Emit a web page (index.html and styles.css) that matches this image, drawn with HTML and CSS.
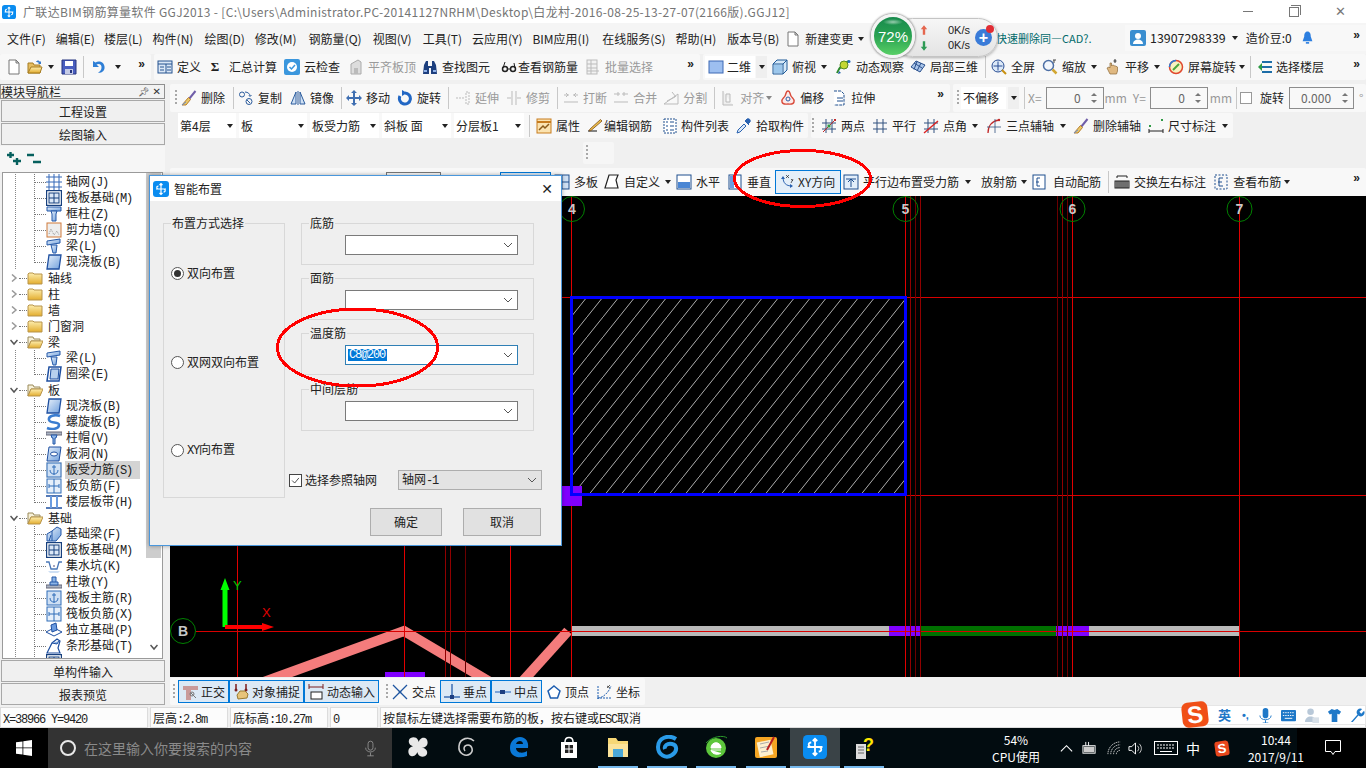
FILE: index.html
```html
<!DOCTYPE html>
<html lang="zh-CN">
<head>
<meta charset="utf-8">
<title>GGJ2013</title>
<link rel="stylesheet" href="styles.css">
</head>
<body>
<svg class="sprite" xmlns="http://www.w3.org/2000/svg">
<defs>
<linearGradient id="gb" x1="0" y1="0" x2="1" y2="1"><stop offset="0" stop-color="#e8f1fb"/><stop offset="1" stop-color="#6f9fdc"/></linearGradient>
<linearGradient id="gf" x1="0" y1="0" x2="0" y2="1"><stop offset="0" stop-color="#fdeeb0"/><stop offset="1" stop-color="#e3ad2e"/></linearGradient>
<symbol id="logo" viewBox="0 0 16 16"><rect width="16" height="16" rx="3" fill="#0a8cf0"/><path d="M8 2.500v11M3 8h10M5.500 8c-2 0-2.500-3 0-3M10.500 8c2 0 2.500 3 0 3M6.500 4l1.500-1.500L9.500 4M6.500 12l1.500 1.500L9.500 12" fill="none" stroke="#fff" stroke-width="1.200"/></symbol>
<symbol id="new" viewBox="0 0 16 16"><path d="M3 1h7l3 3v11H3z" fill="#fff" stroke="#777"/><path d="M10 1v3h3z" fill="#ddd" stroke="#777"/></symbol>
<symbol id="open" viewBox="0 0 16 16"><path d="M1 4h5l1 2h6v8H1z" fill="#e5bd60" stroke="#a67c22"/><path d="M1 14l3-6h11l-2 6z" fill="url(#gf)" stroke="#a67c22"/><path d="M9 3c1-2 3-2 4 0l1-1v3h-3l1-1c-1-1-2-1-3-1" fill="#3a7bc8"/></symbol>
<symbol id="save" viewBox="0 0 16 16"><path d="M1 1h14v14H1z" fill="#4a5fc0" stroke="#26357e"/><rect x="4" y="2" width="8" height="5" fill="#fff"/><rect x="4" y="10" width="8" height="5" fill="#c5cbe6"/><rect x="9" y="11" width="2" height="3" fill="#26357e"/></symbol>
<symbol id="undo" viewBox="0 0 16 16"><path d="M2 2v6h6L5.500 5.500C8 4 11 5.500 10.500 9 10.200 11 9 12.500 7 14c5 0 7-3 6.500-6.500C13 3 8 1 4.500 3.500z" fill="#2f7fd6"/></symbol>
<symbol id="def" viewBox="0 0 16 16"><rect x="1" y="2" width="14" height="12" fill="#dbe7f6" stroke="#25538f"/><path d="M1 5h14M3 8h4M3 11h4M9 5v9M10 8h4M10 11h4" stroke="#25538f" fill="none"/></symbol>
<symbol id="cloud" viewBox="0 0 16 16"><rect width="16" height="16" rx="2" fill="#3b97dd"/><circle cx="8" cy="8" r="5" fill="#fff"/><path d="M5.500 8l2 2 3.500-4" fill="none" stroke="#3b97dd" stroke-width="1.500"/></symbol>
<symbol id="flat" viewBox="0 0 16 16"><path d="M3 15V5l7-4 3 2v12z" fill="#ddd" stroke="#aaa"/><path d="M6 15V9h4v6" fill="#bbb"/></symbol>
<symbol id="find" viewBox="0 0 16 16"><path d="M1 15l1-9 2-4h2v5h4V2h2l2 4 1 9H9V9H7v6z" fill="#1d3f7e"/><rect x="2" y="11" width="3" height="2" fill="#8fb1e8"/><rect x="11" y="11" width="3" height="2" fill="#8fb1e8"/></symbol>
<symbol id="glass" viewBox="0 0 16 16"><circle cx="4" cy="10" r="2.500" fill="none" stroke="#222" stroke-width="1.500"/><circle cx="12" cy="10" r="2.500" fill="none" stroke="#222" stroke-width="1.500"/><path d="M6 10h4M2 9l2-6M14 9l-1-5" stroke="#222" fill="none"/></symbol>
<symbol id="batch" viewBox="0 0 16 16"><rect x="2" y="1" width="10" height="14" fill="#f2f2f2" stroke="#bbb"/><path d="M2 5h10M2 9h10M2 12h12M6 1v14" stroke="#bbb" fill="none"/></symbol>
<symbol id="d2" viewBox="0 0 16 16"><rect x="1" y="2" width="14" height="12" fill="#9dbff0" stroke="#3d69b4"/></symbol>
<symbol id="top" viewBox="0 0 16 16"><path d="M1 5l4-4h10v10l-4 4H1z" fill="#d5e8f8" stroke="#1f5a98"/><path d="M1 5h10v10M11 5l4-4" fill="none" stroke="#1f5a98"/><rect x="2" y="6" width="8" height="8" fill="#9cc7ec"/></symbol>
<symbol id="orbit" viewBox="0 0 16 16"><path d="M1 14C3 9 8 4 13 2" fill="none" stroke="#2c8a2c" stroke-width="2"/><circle cx="8" cy="6" r="4" fill="#c4d733" stroke="#5a8a20"/><path d="M2 15l3-1-2-2z" fill="#1c5fa8"/><circle cx="13" cy="2.500" r="1.500" fill="#2b6fc2"/></symbol>
<symbol id="local" viewBox="0 0 16 16"><path d="M1 8l5-6 9 4-5 7z" fill="#a9c5ea" stroke="#294f8c"/><path d="M4 4l8 5M7 2.500l-3 8M11 4l-4 8" stroke="#294f8c" fill="none"/></symbol>
<symbol id="full" viewBox="0 0 16 16"><circle cx="7" cy="7" r="6" fill="#dce9f8" stroke="#284d94"/><path d="M7 2.500v9M2.500 7h9" stroke="#284d94"/><path d="M11 11l4 4" stroke="#c89010" stroke-width="2"/></symbol>
<symbol id="zm" viewBox="0 0 16 16"><circle cx="6.500" cy="6.500" r="5" fill="#f2f6fc" stroke="#4d6fa5" stroke-width="1.500"/><path d="M10.500 10.500l4 4" stroke="#d2a732" stroke-width="2.500"/><path d="M12 1v3M14 1h-3" stroke="#444"/></symbol>
<symbol id="pan" viewBox="0 0 16 16"><path d="M5 15L2 9l2-1 1 1V4h1.500v3l1-1h1l1 1 1 0 2 1v4l-1 3z" fill="#e0b982" stroke="#8c6a3a" stroke-width=".7"/><path d="M10 0v4M8.500 2h3" stroke="#333"/></symbol>
<symbol id="rot" viewBox="0 0 16 16"><circle cx="8" cy="8" r="6.500" fill="#f8f2c0" stroke="#e0482e" stroke-width="1.500"/><path d="M1.500 8A6.500 6.500 0 0 1 8 1.500" fill="none" stroke="#2d7bd6" stroke-width="1.500"/><path d="M5 11l6-6" stroke="#4aa63a" stroke-width="2"/></symbol>
<symbol id="floor" viewBox="0 0 16 16"><path d="M5 3h10M5 8h10M5 13h10" stroke="#1d6ea8" stroke-width="2"/><path d="M1 8l4-4v8z" fill="#2e9a44"/></symbol>
<symbol id="brush" viewBox="0 0 16 16"><path d="M14.500 1L8 9" stroke="#6f5da8" stroke-width="2"/><path d="M7.500 7.500l2 2L5 15H1z" fill="#e9c96a" stroke="#b87d2a"/><path d="M1 15l4-3" stroke="#6a8fd0"/></symbol>
<symbol id="copy" viewBox="0 0 16 16"><circle cx="4" cy="4.500" r="2.500" fill="none" stroke="#2a5b9c"/><circle cx="11" cy="11.500" r="3" fill="none" stroke="#2a5b9c"/><path d="M7 2c3 0 5 2 5 4M11 5.500l1 1 1.500-1.500M9 10l3 3" stroke="#2a5b9c" fill="none"/></symbol>
<symbol id="mirror" viewBox="0 0 16 16"><path d="M6 2v12H1zM10 2v12h5z" fill="#cfe0f4" stroke="#2a5b9c"/><path d="M8 1v14" stroke="#2a5b9c"/></symbol>
<symbol id="move" viewBox="0 0 16 16"><path d="M8 0l3 3H9v4h4V5l3 3-3 3V9H9v4h2l-3 3-3-3h2V9H3v2L0 8l3-3v2h4V3H5z" fill="#3f6fb2"/></symbol>
<symbol id="rotate" viewBox="0 0 16 16"><path d="M8 3a5.500 5.500 0 1 1-5 3" fill="none" stroke="#2267c4" stroke-width="3"/><path d="M5 0l5 3-5 3z" fill="#2267c4"/></symbol>
<symbol id="ext" viewBox="0 0 16 16"><path d="M1 8h8M11 2h3v12h-3z" stroke="#bbb" fill="none" stroke-dasharray="2 1"/></symbol>
<symbol id="trim" viewBox="0 0 16 16"><path d="M6 1v14M10 1v14M1 8h4M11 8h4" stroke="#bbb" fill="none"/></symbol>
<symbol id="brk" viewBox="0 0 16 16"><path d="M1 5h5M10 5h5M1 12h14M3 3l2 2-2 2M13 3l-2 2 2 2" stroke="#bbb" fill="none"/></symbol>
<symbol id="mrg" viewBox="0 0 16 16"><path d="M1 4h6M9 4h6M1 12h14M5 2v4M11 2v4" stroke="#bbb" fill="none"/></symbol>
<symbol id="spl" viewBox="0 0 16 16"><path d="M1 14h14V4zM4 11l8-4M9 2l4 5" stroke="#bbb" fill="none"/></symbol>
<symbol id="aln" viewBox="0 0 16 16"><path d="M3 1v14h10M6 4h4v8H6z" stroke="#bbb" fill="#eee"/></symbol>
<symbol id="off" viewBox="0 0 16 16"><path d="M8 1c2 0 2 3 3 5s4 3 3 6-4 2-6 2-5 1-6-2 2-4 3-6 1-5 3-5z" fill="#fbeaea" stroke="#d84a3a" stroke-width="1.400"/><circle cx="8" cy="9" r="2" fill="none" stroke="#2b5fa8"/></symbol>
<symbol id="str" viewBox="0 0 16 16"><path d="M3 1h7l3 3v11H3" fill="#fff" stroke="#1e4f8e" stroke-dasharray="3 1"/><path d="M6 8h6M6 11h6" stroke="#1e4f8e"/></symbol>
<symbol id="attr" viewBox="0 0 16 16"><rect x="1" y="1" width="14" height="14" fill="#fbe3b0" stroke="#c77c1e"/><path d="M1 4h14" stroke="#c77c1e" stroke-width="2"/><path d="M3 12l4-4 2 2 4-4" stroke="#8a5a18" fill="none" stroke-width="1.500"/></symbol>
<symbol id="edit" viewBox="0 0 16 16"><path d="M1 13h9" stroke="#111"/><path d="M3 11l-1 2 2-.5L15 3l-1.500-1.500z" fill="#f0c24a" stroke="#7a4b1a" stroke-width=".8"/></symbol>
<symbol id="list" viewBox="0 0 16 16"><rect x="2" y="1" width="12" height="14" fill="#fff" stroke="#1e4f8e" stroke-dasharray="2 1"/><path d="M4 4h2M8 4h4M4 8h2M8 8h4M4 12h2M8 12h4" stroke="#1e4f8e"/></symbol>
<symbol id="pick" viewBox="0 0 16 16"><path d="M1 15l1-3 6-6 2 2-6 6z" fill="#dce9f8" stroke="#2a62b0"/><path d="M9 3l4 4M11 1c2-1 4 1 3 3l-2 2-3-3z" fill="#2a62b0" stroke="#2a62b0"/></symbol>
<symbol id="two" viewBox="0 0 16 16"><path d="M5 1v14M11 1v14M1 5h14M1 11h14" stroke="#30507e"/><path d="M2 14L14 2" stroke="#c22a2a"/><rect x="6.500" y="6.500" width="3" height="3" fill="#2e9a44"/><rect x="13" y="1" width="2" height="2" fill="#c22a2a"/></symbol>
<symbol id="par" viewBox="0 0 16 16"><path d="M5 1v14M11 1v14M1 5h14M1 11h14" stroke="#30507e"/></symbol>
<symbol id="ang" viewBox="0 0 16 16"><path d="M5 1v14M11 1v14M1 5h14M1 11h14" stroke="#30507e"/><path d="M1 15L15 3" stroke="#d22" stroke-width="1.400"/></symbol>
<symbol id="arc" viewBox="0 0 16 16"><path d="M2 15C2 8 6 3 13 2" fill="none" stroke="#c22a2a" stroke-width="1.300"/><path d="M1 9h14M9 1v14" stroke="#30507e" stroke-width=".8"/><circle cx="13" cy="2" r="1.200" fill="#c22a2a"/></symbol>
<symbol id="size" viewBox="0 0 16 16"><path d="M1 11v4M15 11v4M1 13h14" stroke="#222"/><rect x="1" y="7" width="2" height="2" fill="#2e9a44"/><rect x="13" y="1" width="2" height="2" fill="#2e9a44"/></symbol>
<symbol id="multi" viewBox="0 0 16 16"><rect x="1" y="1" width="14" height="14" fill="#cfe0f4" stroke="#1e4f8e"/><path d="M8 1v14M1 8h14" stroke="#1e4f8e"/></symbol>
<symbol id="cust" viewBox="0 0 16 16"><path d="M5 1h9l-2 5 2 8H1z" fill="#fff" stroke="#222" stroke-width="1.200"/></symbol>
<symbol id="hor" viewBox="0 0 16 16"><rect x="1" y="1" width="14" height="14" fill="#fff" stroke="#1e4f8e"/><rect x="2" y="8" width="12" height="6" fill="#4a86d4"/></symbol>
<symbol id="ver" viewBox="0 0 16 16"><rect x="2" y="1" width="12" height="14" fill="#fff" stroke="#1e4f8e"/><rect x="3" y="2" width="4" height="12" fill="#6a9be0"/></symbol>
<symbol id="xyd" viewBox="0 0 16 16"><path d="M4 3c0 6 3 9 9 9" fill="none" stroke="#2a62b0"/><path d="M2 5l2-3 2 3M11 10l3 2-3 2" fill="#2a62b0"/><path d="M7 1l3 3M10 1L7 4M12 5l2 2M14 5l-2 4" stroke="#222" stroke-width=".7"/></symbol>
<symbol id="prl" viewBox="0 0 16 16"><rect x="1" y="1" width="14" height="14" fill="#e3eefa" stroke="#1e4f8e"/><path d="M3 5h10M8 5v8M5 8l3-3 3 3" stroke="#1e4f8e" fill="none"/></symbol>
<symbol id="auto" viewBox="0 0 16 16"><rect x="2" y="1" width="12" height="14" fill="#fff" stroke="#1e4f8e"/><path d="M9 4H6v8h3M5 8h3" stroke="#1e4f8e" fill="none"/></symbol>
<symbol id="swap" viewBox="0 0 16 16"><path d="M3 2h10M3 2v2M13 2v2" stroke="#222"/><rect x="1" y="7" width="14" height="7" fill="#bbb" stroke="#222"/><path d="M3 7v7M5 7v7M7 7v7M9 7v7M11 7v7M13 7v7" stroke="#222"/></symbol>
<symbol id="vr" viewBox="0 0 16 16"><rect x="2" y="1" width="12" height="14" fill="none" stroke="#1e4f8e" stroke-dasharray="2 1.500"/><path d="M10 4H6v8h4M5 8h4" stroke="#1e4f8e" fill="none"/></symbol>
<symbol id="ort" viewBox="0 0 16 16"><path d="M1 2h15v4H9v10H4V6H1z" fill="#c99a9a"/><path d="M9 9l5 5" stroke="#777"/><circle cx="10" cy="10" r="2" fill="none" stroke="#777"/></symbol>
<symbol id="snp" viewBox="0 0 16 16"><path d="M3 0v6M13 0v6" stroke="#7b1e1e" stroke-width="1.500"/><circle cx="3" cy="6" r="1.500" fill="#7b1e1e"/><circle cx="13" cy="6" r="1.500" fill="#7b1e1e"/><path d="M5 15l-1-4 3-4 5 0 3 3-1 4z" fill="#e7c47a" stroke="#9a7a30"/></symbol>
<symbol id="dyn" viewBox="0 0 16 16"><path d="M1 0v5M15 0v5M1 3h14" stroke="#7b1e1e"/><rect x="3" y="8" width="11" height="7" fill="#fff" stroke="#222"/></symbol>
<symbol id="crs" viewBox="0 0 16 16"><path d="M1 1l14 14M15 1L1 15" stroke="#1e55a0" stroke-width="1.300"/><circle cx="8" cy="8" r="1.300" fill="#1e55a0"/></symbol>
<symbol id="prp" viewBox="0 0 16 16"><path d="M8 0v13M0 13h16" stroke="#3c6fb4" stroke-width="1.500"/><rect x="6" y="11" width="4" height="4" fill="#1e3f80"/></symbol>
<symbol id="mdp" viewBox="0 0 16 16"><path d="M0 8h16" stroke="#7aa3d8" stroke-width="2"/><rect x="5" y="6" width="5" height="4" fill="#1e3f80"/></symbol>
<symbol id="vtx" viewBox="0 0 16 16"><path d="M8 2l6 5-2.500 7h-7L2 7z" fill="#fff" stroke="#1e5eb0" stroke-width="1.500"/></symbol>
<symbol id="crd" viewBox="0 0 16 16"><path d="M2 14C7 14 13 8 15 2M2 2v13M1 14h15" stroke="#1e5eb0" fill="none" stroke-dasharray="2 1"/><path d="M11 2l3 2M14 1l-3 3" stroke="#222" stroke-width=".7"/></symbol>
<symbol id="grid" viewBox="0 0 16 16"><path d="M3 0v16M8 0v16M13 0v16M0 3h16M0 8h16M0 13h16" stroke="#3568b8"/></symbol>
<symbol id="raft" viewBox="0 0 16 16"><rect x=".5" y=".5" width="15" height="15" fill="#fff" stroke="#17407e" stroke-width="1.400"/><rect x="3" y="3" width="10" height="10" fill="#dbe7f6" stroke="#17407e"/><path d="M8 3v10M3 8h10" stroke="#17407e"/></symbol>
<symbol id="col" viewBox="0 0 16 16"><path d="M1 1h14v4H1z" fill="url(#gb)" stroke="#2458a8"/><path d="M5 5h6l-1 3v7H6V8z" fill="url(#gb)" stroke="#2458a8"/></symbol>
<symbol id="wall" viewBox="0 0 16 16"><rect x="1" y="1" width="14" height="14" fill="#eee" stroke="#d07a3a"/><path d="M3 12l2-5 3 6 3-4 2 4" stroke="#999" fill="none" stroke-dasharray="1 1"/></symbol>
<symbol id="beam" viewBox="0 0 16 16"><path d="M1 3l13-2v4L1 7z" fill="url(#gb)" stroke="#2458a8"/><path d="M5 7h6l-1 8H7z" fill="url(#gb)" stroke="#2458a8"/></symbol>
<symbol id="slab" viewBox="0 0 16 16"><path d="M3 1h12l-2 14H1z" fill="url(#gb)" stroke="#1e4fa0" stroke-width="1.300"/></symbol>
<symbol id="ring" viewBox="0 0 16 16"><path d="M3 1h12l-2 14H1z" fill="#fff" stroke="#1e4fa0" stroke-width="1.500"/><path d="M5 3h8l-1 10H4z" fill="#b8d0ee" stroke="#1e4fa0"/></symbol>
<symbol id="spiral" viewBox="0 0 16 16"><path d="M14 2C9 0 2 2 3 6s10 1 10 5-7 5-12 3" fill="none" stroke="#3b7dd0" stroke-width="2.500"/></symbol>
<symbol id="cap" viewBox="0 0 16 16"><rect x="0" y="2" width="16" height="3" fill="#aab4c4" stroke="#667"/><path d="M5 5h6l-1 3H9v6H7V8H6z" fill="#8cb4e6" stroke="#2458a8"/></symbol>
<symbol id="hole" viewBox="0 0 16 16"><path d="M3 1h12l-2 14H1z" fill="url(#gb)" stroke="#1e4fa0"/><ellipse cx="8" cy="8" rx="3.500" ry="2" fill="#fff" stroke="#1e4fa0"/></symbol>
<symbol id="rein" viewBox="0 0 16 16"><rect x="1" y="1" width="14" height="14" fill="#cfe0f4" stroke="#2f6cb8"/><path d="M8 3v10M4 8c0 3 2 4 4 4s4-1 4-4" fill="none" stroke="#2f6cb8"/><path d="M6 5h4" stroke="#2f6cb8"/></symbol>
<symbol id="negr" viewBox="0 0 16 16"><rect x="1" y="1" width="14" height="14" fill="#e6effa" stroke="#2f6cb8"/><path d="M8 1v14M3 8h10M3 6v4M13 6v4" stroke="#2f6cb8"/></symbol>
<symbol id="band" viewBox="0 0 16 16"><path d="M0 2h16M0 14h16" stroke="#1e4fa0" stroke-width="1.400"/><path d="M5 2v12M11 2v12" stroke="#6a9be0" stroke-width="2"/></symbol>
<symbol id="fbeam" viewBox="0 0 16 16"><path d="M1 15V8l5-3 5-4 4 2v6l-5 6z" fill="url(#gb)" stroke="#2458a8"/><path d="M6 5v10M3 15l2-6" stroke="#2458a8"/></symbol>
<symbol id="pit" viewBox="0 0 16 16"><path d="M0 4h3l2 7h6l2-7h3" fill="none" stroke="#4a78b8" stroke-width="1.300"/><path d="M2 13h12l-2 2H4z" fill="#cfe0f4"/><circle cx="8" cy="8" r="1" fill="#88a"/></symbol>
<symbol id="pier" viewBox="0 0 16 16"><rect y="11" width="16" height="3" fill="#aab4c4" stroke="#667"/><path d="M4 11V8h8v3zM6 8V3h4v5" fill="#8cb4e6" stroke="#2458a8"/></symbol>
<symbol id="ind" viewBox="0 0 16 16"><path d="M0 10l8-4 8 4-8 4z" fill="#fff" stroke="#1e4fa0"/><path d="M5 3l5-2 1 7-5 2z" fill="#6a9be0" stroke="#1e4fa0"/></symbol>
<symbol id="strip" viewBox="0 0 16 16"><path d="M1 15l2-4 3-6 5-4 3 2-2 7 2 5z" fill="#fff" stroke="#1e4fa0" stroke-width="1.200"/><path d="M6 5l5 1 2-3" fill="#8cb4e6" stroke="#1e4fa0"/></symbol>
<symbol id="fc" viewBox="0 0 16 16"><path d="M1 4l1-1h4l1 1h8v10H1z" fill="url(#gf)" stroke="#b8944a"/></symbol>
<symbol id="fo" viewBox="0 0 16 16"><path d="M1 3h5l1 2h6v2H4l-3 7z" fill="#f6f0d8" stroke="#9a8a5a"/><path d="M1 14l3-7h12l-3 7z" fill="url(#gf)" stroke="#b8944a"/></symbol>
<symbol id="chr" viewBox="0 0 8 8"><path d="M2 .5L6 4 2 7.500" fill="none" stroke="#999" stroke-width="1.500"/></symbol>
<symbol id="chd" viewBox="0 0 8 8"><path d="M.5 2L4 6l3.500-4" fill="none" stroke="#555" stroke-width="1.500"/></symbol>
<symbol id="cbv" viewBox="0 0 10 6"><path d="M1 1l4 4 4-4" fill="none" stroke="#555"/></symbol>
</defs>
</svg>

<div class="app">
  <header class="titlebar">
    <svg class="i t-logo"><use href="#logo"/></svg>
    <span class="t-text">广联达BIM钢筋算量软件 GGJ2013 - [C:\Users\Administrator.PC-20141127NRHM\Desktop\白龙村-2016-08-25-13-27-07(2166版).GGJ12]</span>
    <div class="wctl">
      <span class="wmin"></span>
      <span class="wres"></span>
      <span class="wcls">✕</span>
    </div>
  </header>

  <nav class="menurow">
    <div class="menu">
      <span class="mi m7">文件(F)</span><span class="mi">编辑(E)</span><span class="mi m9">楼层(L)</span><span class="mi">构件(N)</span><span class="mi m11">绘图(D)</span><span class="mi">修改(M)</span><span class="mi m12">钢筋量(Q)</span><span class="mi m11">视图(V)</span><span class="mi m11">工具(T)</span><span class="mi">云应用(Y)</span><span class="mi">BIM应用(I)</span><span class="mi m13">在线服务(S)</span><span class="mi">帮助(H)</span><span class="mi m11">版本号(B)</span>
      <span class="it m6"><svg class="i"><use href="#new"/></svg>新建变更</span><span class="caret m5"></span>
    </div>
    <span class="news">快速删除同—CAD?.</span>
    <div class="userbar">
      <svg class="i ua" viewBox="0 0 16 16"><rect width="16" height="16" rx="2" fill="#3a8ed0"/><circle cx="8" cy="6" r="3" fill="#fff"/><path d="M3 14c0-6 10-6 10 0z" fill="#fff"/></svg>
      <span class="un">13907298339</span><span class="caret m6"></span>
      <span class="m8 bean">造价豆:0</span>
      <svg class="i bell" viewBox="0 0 16 16"><path d="M8 0c3 0 4 3 4 6l2 6H2l2-6c0-3 1-6 4-6z" fill="#2d7fe0"/><rect x="6" y="13" width="4" height="2" fill="#2d7fe0"/></svg>
      <span class="more">»</span>
    </div>
  </nav>

  <div class="tbrow r1">
    <div class="bar b1a">
      <svg class="i m6"><use href="#new"/></svg>
      <svg class="i m5"><use href="#open"/></svg><span class="caret m5"></span>
      <svg class="i m7"><use href="#save"/></svg>
      <span class="sep m6"></span>
      <svg class="i m7"><use href="#undo"/></svg><span class="caret m8"></span>
      <span class="more">»</span>
    </div>
    <div class="bar b1b">
      <span class="it m3"><svg class="i"><use href="#def"/></svg>定义</span>
      <span class="it m9"><span class="sigma">Σ</span>汇总计算</span>
      <span class="it"><svg class="i"><use href="#cloud"/></svg>云检查</span>
      <span class="it m8 dis"><svg class="i"><use href="#flat"/></svg>平齐板顶</span>
      <span class="it m6"><svg class="i"><use href="#find"/></svg>查找图元</span>
      <span class="it m11 tight"><svg class="i"><use href="#glass"/></svg>查看钢筋量</span>
      <span class="it dis"><svg class="i"><use href="#batch"/></svg>批量选择</span>
      <span class="more">»</span>
    </div>
    <div class="bar b1c">
      <span class="combo m2 c2d"><svg class="i"><use href="#d2"/></svg>二维</span>
      <span class="cbtn m1"><span class="caret"></span></span>
      <span class="it m5"><svg class="i"><use href="#top"/></svg>俯视</span><span class="caret m5"></span>
      <span class="it m9"><svg class="i"><use href="#orbit"/></svg>动态观察</span>
      <span class="it m6"><svg class="i"><use href="#local"/></svg>局部三维</span>
      <span class="sep"></span>
      <span class="it m5"><svg class="i"><use href="#full"/></svg>全屏</span>
      <span class="it m7"><svg class="i"><use href="#zm"/></svg>缩放</span><span class="caret m5"></span>
      <span class="it m8"><svg class="i"><use href="#pan"/></svg>平移</span><span class="caret m5"></span>
      <span class="it m8"><svg class="i"><use href="#rot"/></svg>屏幕旋转</span><span class="caret m3"></span>
      <span class="sep m5"></span>
      <span class="it m6 tight2"><svg class="i"><use href="#floor"/></svg>选择楼层</span>
      <span class="more">»</span>
    </div>
  </div>

  <div class="main">
    <aside class="nav">
      <div class="navtitle"><span>模块导航栏</span><span class="navpin">📌︎</span><span class="navx">✕</span></div>
      <div class="navbtn">工程设置</div>
      <div class="navbtn">绘图输入</div>
      <div class="treehead">
        <svg class="i" viewBox="0 0 16 16"><path d="M1 4h7M4.500 1v6M7 10h8M11 7v7" stroke="#06605e" stroke-width="2.400"/></svg>
        <svg class="i m4" viewBox="0 0 16 16"><path d="M1 4h7M7 11h8" stroke="#06605e" stroke-width="2.400"/></svg>
      </div>
      <div class="tree">
        <div class="list">
          <div class="row c"><i class="g"></i><svg class="i"><use href="#grid"/></svg><span>轴网<b class="la">(J)</b></span></div>
          <div class="row c"><i class="g"></i><svg class="i"><use href="#raft"/></svg><span>筏板基础<b class="la">(M)</b></span></div>
          <div class="row c"><i class="g"></i><svg class="i"><use href="#col"/></svg><span>框柱<b class="la">(Z)</b></span></div>
          <div class="row c"><i class="g"></i><svg class="i"><use href="#wall"/></svg><span>剪力墙<b class="la">(Q)</b></span></div>
          <div class="row c"><i class="g"></i><svg class="i"><use href="#beam"/></svg><span>梁<b class="la">(L)</b></span></div>
          <div class="row c last"><i class="g"></i><svg class="i"><use href="#slab"/></svg><span>现浇板<b class="la">(B)</b></span></div>
          <div class="row p"><svg class="chv"><use href="#chr"/></svg><i class="d"></i><svg class="i"><use href="#fc"/></svg><span>轴线</span></div>
          <div class="row p"><svg class="chv"><use href="#chr"/></svg><i class="d"></i><svg class="i"><use href="#fc"/></svg><span>柱</span></div>
          <div class="row p"><svg class="chv"><use href="#chr"/></svg><i class="d"></i><svg class="i"><use href="#fc"/></svg><span>墙</span></div>
          <div class="row p"><svg class="chv"><use href="#chr"/></svg><i class="d"></i><svg class="i"><use href="#fc"/></svg><span>门窗洞</span></div>
          <div class="row p"><svg class="chv"><use href="#chd"/></svg><i class="d"></i><svg class="i"><use href="#fo"/></svg><span>梁</span></div>
          <div class="row c"><i class="g"></i><svg class="i"><use href="#beam"/></svg><span>梁<b class="la">(L)</b></span></div>
          <div class="row c last"><i class="g"></i><svg class="i"><use href="#ring"/></svg><span>圈梁<b class="la">(E)</b></span></div>
          <div class="row p"><svg class="chv"><use href="#chd"/></svg><i class="d"></i><svg class="i"><use href="#fo"/></svg><span>板</span></div>
          <div class="row c"><i class="g"></i><svg class="i"><use href="#slab"/></svg><span>现浇板<b class="la">(B)</b></span></div>
          <div class="row c"><i class="g"></i><svg class="i"><use href="#spiral"/></svg><span>螺旋板<b class="la">(B)</b></span></div>
          <div class="row c"><i class="g"></i><svg class="i"><use href="#cap"/></svg><span>柱帽<b class="la">(V)</b></span></div>
          <div class="row c"><i class="g"></i><svg class="i"><use href="#hole"/></svg><span>板洞<b class="la">(N)</b></span></div>
          <div class="row c sel"><i class="g"></i><svg class="i"><use href="#rein"/></svg><span>板受力筋<b class="la">(S)</b></span></div>
          <div class="row c"><i class="g"></i><svg class="i"><use href="#negr"/></svg><span>板负筋<b class="la">(F)</b></span></div>
          <div class="row c last"><i class="g"></i><svg class="i"><use href="#band"/></svg><span>楼层板带<b class="la">(H)</b></span></div>
          <div class="row p"><svg class="chv"><use href="#chd"/></svg><i class="d"></i><svg class="i"><use href="#fo"/></svg><span>基础</span></div>
          <div class="row c"><i class="g"></i><svg class="i"><use href="#fbeam"/></svg><span>基础梁<b class="la">(F)</b></span></div>
          <div class="row c"><i class="g"></i><svg class="i"><use href="#raft"/></svg><span>筏板基础<b class="la">(M)</b></span></div>
          <div class="row c"><i class="g"></i><svg class="i"><use href="#pit"/></svg><span>集水坑<b class="la">(K)</b></span></div>
          <div class="row c"><i class="g"></i><svg class="i"><use href="#pier"/></svg><span>柱墩<b class="la">(Y)</b></span></div>
          <div class="row c"><i class="g"></i><svg class="i"><use href="#rein"/></svg><span>筏板主筋<b class="la">(R)</b></span></div>
          <div class="row c"><i class="g"></i><svg class="i"><use href="#negr"/></svg><span>筏板负筋<b class="la">(X)</b></span></div>
          <div class="row c"><i class="g"></i><svg class="i"><use href="#ind"/></svg><span>独立基础<b class="la">(P)</b></span></div>
          <div class="row c"><i class="g"></i><svg class="i"><use href="#strip"/></svg><span>条形基础<b class="la">(T)</b></span></div>
          <div class="row c"><i class="g"></i><svg class="i"><use href="#raft"/></svg></div>
        </div>
        <div class="scroll"><div class="thumb"></div><svg class="sdown"><use href="#chd"/></svg></div>
      </div>
      <div class="navbtn">单构件输入</div>
      <div class="navbtn">报表预览</div>
    </aside>

    <section class="work">
      <div class="tbrow r2">
        <div class="bar b2a">
          <span class="grip m5"></span>
          <span class="it m4"><svg class="i"><use href="#brush"/></svg>删除</span>
          <span class="sep m8"></span>
          <span class="it m4"><svg class="i"><use href="#copy"/></svg>复制</span>
          <span class="it m8"><svg class="i"><use href="#mirror"/></svg>镜像</span>
          <span class="sep"></span>
          <span class="it m4"><svg class="i"><use href="#move"/></svg>移动</span>
          <span class="it m7"><svg class="i"><use href="#rotate"/></svg>旋转</span>
          <span class="sep"></span>
          <span class="it m6 dis"><svg class="i"><use href="#ext"/></svg>延伸</span>
          <span class="it m7 dis"><svg class="i"><use href="#trim"/></svg>修剪</span>
          <span class="sep"></span>
          <span class="it m5 dis"><svg class="i"><use href="#brk"/></svg>打断</span>
          <span class="it m6 dis"><svg class="i"><use href="#mrg"/></svg>合并</span>
          <span class="it m6 dis"><svg class="i"><use href="#spl"/></svg>分割</span>
          <span class="sep"></span>
          <span class="it m5 dis"><svg class="i"><use href="#aln"/></svg>对齐</span><span class="caret m2 dcaret"></span>
          <span class="it m8"><svg class="i"><use href="#off"/></svg>偏移</span>
          <span class="it m7"><svg class="i"><use href="#str"/></svg>拉伸</span>
          <span class="more">»</span>
        </div>
        <div class="bar b2b">
          <span class="grip m4"></span>
          <span class="combo m2 cno">不偏移</span>
          <span class="cbtn m2"><span class="caret"></span></span>
          <span class="sep m5"></span>
          <span class="lbl m3">X=</span>
          <span class="spin m4 s58">0<span class="spn"><i class="up"></i><i class="dn"></i></span></span>
          <span class="lbl m1">mm</span>
          <span class="lbl m6">Y=</span>
          <span class="spin m4 s58">0<span class="spn"><i class="up"></i><i class="dn"></i></span></span>
          <span class="lbl m2">mm</span>
          <span class="sep m4"></span>
          <span class="ck m3"></span>
          <span class="m8 rl">旋转</span>
          <span class="spin m5 s65">0.000<span class="spn"><i class="up"></i><i class="dn"></i></span></span>
          <span class="lbl m5">°</span>
        </div>
      </div>

      <div class="tbrow r3">
        <div class="bar b3a">
          <span class="cell w58">第4层<span class="caret"></span></span>
          <span class="cell w68">板<span class="caret"></span></span>
          <span class="cell w69">板受力筋<span class="caret"></span></span>
          <span class="cell w69">斜板 面<span class="caret"></span></span>
          <span class="cell w70">分层板1<span class="caret"></span></span>
          <span class="sep m2"></span>
          <span class="it m6"><svg class="i"><use href="#attr"/></svg>属性</span>
          <span class="it m7 tight"><svg class="i"><use href="#edit"/></svg>编辑钢筋</span>
          <span class="it m10 tight2"><svg class="i"><use href="#list"/></svg>构件列表</span>
          <span class="it m7"><svg class="i"><use href="#pick"/></svg>拾取构件</span>
        </div>
        <div class="bar b3b">
          <span class="grip m1"></span>
          <span class="it m7"><svg class="i"><use href="#two"/></svg>两点</span>
          <span class="it m7"><svg class="i"><use href="#par"/></svg>平行</span>
          <span class="it m7"><svg class="i"><use href="#ang"/></svg>点角</span><span class="caret m5"></span>
          <span class="it m8"><svg class="i"><use href="#arc"/></svg>三点辅轴</span><span class="caret m6"></span>
          <span class="it m7"><svg class="i"><use href="#brush"/></svg>删除辅轴</span>
          <span class="it m7"><svg class="i"><use href="#size"/></svg>尺寸标注</span><span class="caret m6"></span>
        </div>
      </div>

      <div class="tbrow r4"><div class="bar b4"><span class="grip m3"></span></div></div>

      <div class="tbrow r5">
        <div class="bar b5">
          <span class="hidbtn h1"></span>
          <span class="hidbtn h2"></span>
          <span class="it m3"><svg class="i"><use href="#multi"/></svg>多板</span>
          <span class="it m6"><svg class="i"><use href="#cust"/></svg>自定义</span><span class="caret m5"></span>
          <span class="it m5"><svg class="i"><use href="#hor"/></svg>水平</span>
          <span class="it m7 vr"><svg class="i"><use href="#ver"/></svg>垂直</span>
          <span class="it act xy"><svg class="i"><use href="#xyd"/></svg>XY方向</span>
          <span class="it m2"><svg class="i"><use href="#prl"/></svg>平行边布置受力筋</span><span class="caret m6"></span>
          <span class="m10">放射筋</span><span class="caret m4"></span>
          <span class="it m4 au"><svg class="i"><use href="#auto"/></svg>自动配筋</span>
          <span class="sep m7"></span>
          <span class="it m5"><svg class="i"><use href="#swap"/></svg>交换左右标注</span>
          <span class="it m7"><svg class="i"><use href="#vr"/></svg>查看布筋</span><span class="caret m3"></span>
          <span class="more">»</span>
        </div>
      </div>

      <div class="canvas">
        <svg class="cad" viewBox="170 196 1196 481" xmlns="http://www.w3.org/2000/svg">
          <defs>
            <pattern id="hatch" width="16" height="20" patternUnits="userSpaceOnUse" x="571" y="297"><path d="M0 20L16 0" stroke="#c0c0c0" stroke-width=".9"/></pattern>
          </defs>
          <rect x="170" y="196" width="1196" height="481" fill="#000"/>
          <rect x="571.500" y="297.500" width="334" height="197" fill="url(#hatch)"/>
          <g stroke="#f47c7c" stroke-width="10" fill="none">
            <path d="M250 687L404 631L490 682"/>
            <path d="M522 682L568 631"/>
          </g>
          <rect x="572" y="626" width="667" height="10" fill="#b9b9b9"/>
          <rect x="889" y="626" width="32" height="10" fill="#8000ff"/>
          <rect x="921" y="626" width="135" height="10" fill="#007000"/>
          <rect x="1056" y="626" width="33" height="10" fill="#8000ff"/>
          <g shape-rendering="crispEdges">
            <rect x="385" y="672" width="40" height="5" fill="#8000ff"/>
            <path d="M170 297.500H1366M170 495.500H1366M196 631.500H1366" stroke="#d80000"/>
            <path d="M237.500 196V677M404.500 196V677M510.500 196V677M571.500 196V677M905.500 196V677M1072.500 196V677M1239.500 196V677" stroke="#e00000"/>
            <path d="M445.500 196V677M450.500 196V677M910.500 196V677M920.500 196V677M1062.500 196V677" stroke="#900000"/>
            <path d="M465.500 196V677M915.500 196V677M1057.500 196V677M1067.500 196V677" stroke="#6a0000"/>
            <rect x="561" y="486" width="21" height="20" fill="#8000ff"/>
          </g>
          <rect x="571.500" y="297.500" width="334" height="197" fill="none" stroke="#0000ff" stroke-width="3"/>
          <g fill="none" stroke="#008000">
            <circle cx="572" cy="209" r="12.500"/><circle cx="905.500" cy="209" r="12.500"/><circle cx="1072.500" cy="209" r="12.500"/><circle cx="1239.500" cy="209" r="12.500"/><circle cx="183" cy="631" r="12.500"/>
          </g>
          <g class="bub">
            <text x="572" y="214">4</text><text x="905.500" y="214">5</text><text x="1072.500" y="214">6</text><text x="1239.500" y="214">7</text><text x="183" y="636">B</text>
          </g>
          <path d="M222.500 627V590H220.500L225 578L229.500 590H227.500V627z" fill="#00ff00"/>
          <path d="M225 625H262V623L274 627L262 631V629H225z" fill="#ff0000"/>
          <text class="axy" x="233" y="590">Y</text>
          <text class="axx" x="262" y="617">X</text>
        </svg>
      </div>

      <div class="tbrow r6">
        <div class="bar b6">
          <span class="grip m3"></span>
          <span class="it tog"><svg class="i"><use href="#ort"/></svg>正交</span>
          <span class="it tog"><svg class="i"><use href="#snp"/></svg>对象捕捉</span>
          <span class="it tog"><svg class="i"><use href="#dyn"/></svg>动态输入</span>
          <span class="grip m7"></span>
          <span class="it m1"><svg class="i"><use href="#crs"/></svg>交点</span>
          <span class="it tog tg1"><svg class="i"><use href="#prp"/></svg>垂点</span>
          <span class="it tog"><svg class="i"><use href="#mdp"/></svg>中点</span>
          <span class="it m4 s3"><svg class="i"><use href="#vtx"/></svg>顶点</span>
          <span class="it m7"><svg class="i"><use href="#crd"/></svg>坐标</span>
        </div>
      </div>
    </section>
  </div>

  <footer class="status">
    <span class="st w148"><b class="la">X=38966 Y=9420</b></span>
    <span class="st w78">层高<b class="la">:2.8m</b></span>
    <span class="st w98">底标高<b class="la">:10.27m</b></span>
    <span class="st w48"><b class="la">0</b></span>
    <span class="st grow">按鼠标左键选择需要布筋的板，按右键或<b class="la">ESC</b>取消</span>
  </footer>

  <div class="taskbar">
    <div class="start"><svg class="win" viewBox="0 0 16 16"><path d="M0 2.300L6.500 1.400V7.500H0zM7.300 1.300L16 0V7.500H7.300zM0 8.300H6.500V14.500L0 13.700zM7.300 8.300H16V16L7.300 14.700z" fill="#fff"/></svg></div>
    <div class="search">
      <span class="cort"></span>
      <span class="stext">在这里输入你要搜索的内容</span>
      <svg class="mic" viewBox="0 0 16 20"><rect x="5" y="1" width="6" height="11" rx="3" fill="none" stroke="#999"/><path d="M2 9c0 7 12 7 12 0M8 15v4M4 19h8" fill="none" stroke="#999"/></svg>
    </div>
    <div class="tiles">
      <div class="tile nudge1"><div class="tbox"><svg class="ti" viewBox="0 0 24 24"><path d="M12 12C4 12 2 8 3 5s7-4 9 0 0 7 0 7zM12 12c0-8 4-10 7-9s4 7 0 9-7 0-7 0zM12 12c8 0 10 4 9 7s-7 4-9 0 0-7 0-7zM12 12c0 8-4 10-7 9s-4-7 0-9 7 0 7 0z" fill="#e8e8e8"/></svg></div></div>
      <div class="tile nudge2"><div class="tbox"><svg class="ti" viewBox="0 0 24 24"><path d="M19 6C14 1 5 3 4 11s7 11 11 8 2-9-2-9-5 4-3 6" fill="none" stroke="#ccc" stroke-width="1.600"/></svg></div></div>
      <div class="tile"><div class="tbox"><svg class="ti" viewBox="0 0 24 24"><path d="M3 13C3 6 8 2 13 2c6 0 9 5 8 11H9c0 5 7 6 11 3v5c-8 3-17 1-17-8zM9 9h7c0-4-6-4-7 0z" fill="#0a78d6"/></svg></div></div>
      <div class="tile"><div class="tbox"><svg class="ti" viewBox="0 0 24 24"><path d="M4 7h16v16H4z" fill="#fff"/><path d="M8 7c0-6 8-6 8 0" fill="none" stroke="#fff" stroke-width="1.500"/><path d="M8 10h3.500v3.500H8zM12.500 10H16v3.500h-3.500zM8 14.500h3.500V18H8zM12.500 14.500H16V18h-3.500z" fill="#222"/></svg></div></div>
      <div class="tile"><div class="tbox run"><svg class="ti" viewBox="0 0 24 24"><path d="M2 3h8l2 3h10v16H2z" fill="#f6d775"/><rect x="2" y="9" width="20" height="13" fill="#fbe39a"/><rect x="7" y="14" width="10" height="8" fill="#4ba8d8"/></svg></div></div>
      <div class="tile"><div class="tbox run"><svg class="ti" viewBox="0 0 24 24"><path d="M21 4C13-1 3 3 3 12c0 8 8 12 14 8s5-10 0-11-8 2-7 5" fill="none" stroke="#2a9be8" stroke-width="4"/></svg></div></div>
      <div class="tile"><div class="tbox run"><svg class="ti" viewBox="0 0 24 24"><circle cx="12" cy="13" r="10" fill="#5dc63c"/><path d="M7 13c0-7 10-7 10 0H7zM7 15h10M7 15c1 5 8 5 10 3" fill="#fff" stroke="#fff"/><path d="M2 8C8 1 20 0 23 3" fill="none" stroke="#2a9a2a"/></svg></div></div>
      <div class="tile"><div class="tbox run"><svg class="ti" viewBox="0 0 24 24"><rect x="1" y="2" width="22" height="21" rx="2" fill="#f5a623"/><rect x="4" y="6" width="14" height="15" fill="#fdf0cf" transform="rotate(-12 11 13)"/><path d="M6 9l9-2M6 13l10-2M7 17l7-1" stroke="#aaa"/><path d="M20 2l-7 13" stroke="#b82020" stroke-width="2"/></svg></div></div>
      <div class="tile active"><div class="tbox run"><svg class="ti"><use href="#logo"/></svg></div></div>
      <div class="tile"><div class="tbox run"><svg class="ti" viewBox="0 0 24 24"><rect x="4" y="9" width="10" height="15" fill="#ddd"/><path d="M6 12h6M6 15h6M6 18h6" stroke="#666"/><text class="qm" x="11" y="16">?</text></svg></div></div>
    </div>
    <div class="cpu"><div>54%</div><div>CPU使用</div></div>
    <div class="tray">
      <svg class="tr t1" viewBox="0 0 16 16"><path d="M2 11l6-6 6 6" fill="none" stroke="#fff" stroke-width="1.200"/></svg>
      <svg class="tr t2" viewBox="0 0 16 16"><rect x="1" y="5" width="13" height="8" fill="none" stroke="#fff"/><rect x="2" y="6" width="11" height="6" fill="#ccc"/><path d="M4 1v4M7 1v4" stroke="#fff"/></svg>
      <svg class="tr t3" viewBox="0 0 16 16"><path d="M1 14a13 13 0 0 1 13-13M4 14a10 10 0 0 1 10-10M7 14a7 7 0 0 1 7-7M10 14a4 4 0 0 1 4-4" fill="none" stroke="#ddd" stroke-dasharray="1.500 .7"/></svg>
      <svg class="tr t4" viewBox="0 0 16 16"><path d="M1 6h3l4-4v12l-4-4H1z" fill="none" stroke="#fff"/><path d="M10 5c2 2 2 4 0 6M12 3c3 3 3 7 0 10" fill="none" stroke="#ccc"/></svg>
      <svg class="kb" viewBox="0 0 24 16"><rect x=".5" y="1.500" width="23" height="13" fill="none" stroke="#fff"/><path d="M3 5h18M3 8h18" stroke="#fff" stroke-dasharray="2 1"/><path d="M6 11.500h12" stroke="#fff"/></svg>
      <span class="zh">中</span>
      <span class="sg"><span class="sgs">S</span></span>
    </div>
    <div class="clock"><div>10:44</div><div>2017/9/11</div></div>
    <div class="notify"><svg viewBox="0 0 16 16"><path d="M.5.500h15v11H10l-2 3-2-3H.5z" fill="none" stroke="#fff"/></svg></div>
  </div>
</div>

<div class="dialog">
  <div class="dtitle"><svg class="i"><use href="#logo"/></svg><span>智能布置</span><span class="dx">✕</span></div>
  <div class="dbody">
    <div class="grp gl">
      <div class="lg">布置方式选择</div>
      <div class="rad r-a"><span class="ro on"></span><span>双向布置</span></div>
      <div class="rad r-b"><span class="ro"></span><span>双网双向布置</span></div>
      <div class="rad r-c"><span class="ro"></span><span><b class="la">XY</b>向布置</span></div>
    </div>
    <div class="dright">
      <div class="grp gr"><div class="lg">底筋</div><div class="dcb"><svg class="cv"><use href="#cbv"/></svg></div></div>
      <div class="grp gr"><div class="lg">面筋</div><div class="dcb"><svg class="cv"><use href="#cbv"/></svg></div></div>
      <div class="grp gr g3"><div class="lg">温度筋</div><div class="dcb foc"><span class="hl">C8@200</span><svg class="cv"><use href="#cbv"/></svg></div></div>
      <div class="grp gr"><div class="lg">中间层筋</div><div class="dcb"><svg class="cv"><use href="#cbv"/></svg></div></div>
      <div class="drow">
        <span class="dck"><svg viewBox="0 0 13 13"><path d="M2.500 6.500l3 3 5-6" fill="none" stroke="#333"/></svg></span>
        <span class="dtxt">选择参照轴网</span>
        <div class="dcb2"><span>轴网<b class="la">-1</b></span><svg class="cv"><use href="#cbv"/></svg></div>
      </div>
      <div class="dbtns"><span class="dbtn b72">确定</span><span class="dbtn b78">取消</span></div>
    </div>
  </div>
</div>

<div class="widget">
  <div class="pill">
    <div class="pa">
      <svg class="arr" viewBox="0 0 10 12"><path d="M5 0l4 5H6.500v7h-3V5H1z" fill="#e5664e"/></svg>
      <svg class="arr" viewBox="0 0 10 12"><path d="M5 12l4-5H6.500V0h-3v7H1z" fill="#2e9a54"/></svg>
    </div>
    <div class="ps"><span>0K/s</span><span>0K/s</span></div>
    <div class="pb"><span class="plus">+</span><span class="dot"></span></div>
  </div>
  <div class="ball"><span>72%</span></div>
</div>

<div class="ime">
  <span class="imes"><span>S</span></span>
  <div class="imebar">
    <span class="ien">英</span>
    <span class="ipn">•,</span>
    <svg class="ii" viewBox="0 0 16 16"><rect x="5" y="0" width="6" height="11" rx="3" fill="#1e78c8"/><path d="M2 8c0 6 12 6 12 0M8 13v3M5 16h6" fill="none" stroke="#1e78c8"/></svg>
    <svg class="ii" viewBox="0 0 16 16"><rect x="0" y="2" width="16" height="12" rx="1" fill="#1e78c8"/><path d="M2 5h12M2 8h12" stroke="#fff" stroke-dasharray="1.500 1"/><path d="M4 11h8" stroke="#fff"/></svg>
    <svg class="ii" viewBox="0 0 16 16"><circle cx="7" cy="4" r="3.500" fill="#b8c8d8"/><path d="M1 15c0-8 12-8 12 0z" fill="#b8c8d8"/><rect x="9" y="10" width="7" height="6" fill="#d8e0e8"/></svg>
    <svg class="ii" viewBox="0 0 16 16"><path d="M5 1L1 4l2 3 2-1v9h6V6l2 1 2-3-4-3-3 1z" fill="#1e78c8"/></svg>
    <svg class="ii" viewBox="0 0 16 16"><path d="M1 15l7-8a4 4 0 0 1 5-6L10 4l2 2 3-3a4 4 0 0 1-6 5l-6 7z" fill="#1e78c8"/></svg>
  </div>
</div>

<svg class="ink" viewBox="0 0 1366 768" xmlns="http://www.w3.org/2000/svg">
  <ellipse cx="802.500" cy="178.500" rx="68" ry="28" fill="none" stroke="#f00" stroke-width="3"/>
  <ellipse cx="357.500" cy="347.500" rx="80" ry="38.500" fill="none" stroke="#f00" stroke-width="3"/>
</svg>
</body>
</html>
```

FILE: styles.css
```css
*{box-sizing:border-box}
html,body{margin:0;padding:0}
body{width:1366px;height:768px;overflow:hidden;position:relative;font:12px/16px "Noto Sans CJK SC","Liberation Sans",sans-serif;color:#222;background:#f0f0f0}
.sprite{width:0;height:0;position:absolute}
.app{width:1366px;height:768px;display:flex;flex-direction:column}
.i{width:16px;height:16px;flex:none;display:block}
.la{font:12px/16px "Liberation Mono",monospace;letter-spacing:-1.200px;color:inherit}
b.la{font-weight:400}

.titlebar{height:23px;background:#fff;display:flex;align-items:center;flex:none}
.t-logo{margin-left:2px;width:14px;height:14px}
.t-text{margin-left:7px;color:#757575;font-size:12px;white-space:pre;letter-spacing:.32px}
.wctl{margin-left:auto;display:flex;align-items:center;height:20px}
.wmin{width:10px;height:1px;background:#777;margin-right:36px}
.wres{width:10px;height:10px;border:1px solid #777;margin-right:36px;position:relative}
.wres::before{content:"";position:absolute;left:1px;top:-3px;width:9px;height:9px;border:1px solid #777;border-left:0;border-bottom:0}
.wcls{color:#777;font-size:13px;margin-right:20px;font-family:"DejaVu Sans",sans-serif}

.menurow{height:31px;flex:none;background:#f5f5f5;display:flex;align-items:center;position:relative}
.menu{display:flex;align-items:center}
.mi{margin-left:10px;white-space:nowrap}
.news{position:absolute;left:996px;top:7px;color:#006a6a;white-space:nowrap;font-size:11px}
.userbar{position:absolute;left:1125px;right:0;top:2px;height:26px;background:#f8f8f8;display:flex;align-items:center;padding-left:5px}
.un{margin-left:4px;font-size:12.400px}
.bell{margin-left:9px;width:13px}
.caret{width:0;height:0;border:3px solid transparent;border-top:4px solid #222;border-bottom:0;display:block;flex:none}
.dcaret{border-top-color:#888}
.more{margin-left:auto;margin-right:6px;font:700 12px/12px "Liberation Sans",sans-serif;align-self:flex-start;margin-top:4px}

.tbrow{display:flex;flex:none}
.r1{height:30px;padding-bottom:4px;background:#f0f0f0}
.bar{display:flex;align-items:center;background:#f8f8f8;height:100%;white-space:nowrap;border-radius:2px}
.it{display:flex;align-items:center;gap:4px;margin-left:7px;flex:none}
.tight{gap:1px}
.tight2{gap:3px}
.dis{color:#9a9a9a}
.sep{width:1px;height:22px;background:#c8c8c8;flex:none;margin-left:7px}
.sigma{font:700 13px/16px "Liberation Serif",serif;width:10px;margin-right:5px;text-align:center}
.m1{margin-left:1px}.m2{margin-left:2px}.m3{margin-left:3px}.m4{margin-left:4px}.m5{margin-left:5px}.m6{margin-left:6px}.m7{margin-left:7px}.m8{margin-left:8px}.m9{margin-left:9px}.m10{margin-left:10px}.m11{margin-left:11px}.m12{margin-left:12px}.m13{margin-left:13px}
.b1a{width:151px}
.b1b{width:546px;margin-left:3px}
.b1c{flex:1;margin-left:3px}
.combo{display:flex;align-items:center;background:#fff;height:22px;flex:none}
.c2d{width:50px;padding-left:3px;gap:3px}
.cno{width:45px;padding-left:2px}
.cbtn{width:11px;height:22px;background:#efefef;display:flex;align-items:center;justify-content:center;flex:none}

.main{display:flex;height:623px;flex:none}
.nav{width:170px;flex:none;padding-right:5px;display:flex;flex-direction:column}
.navtitle{height:15px;border:1px solid #8f8f8f;display:flex;align-items:center;font-size:12px;line-height:13px;background:#f2f2f2;margin-bottom:1px;padding-left:0}
.navpin{margin-left:auto;font:9px/12px "DejaVu Sans",sans-serif;color:#333}
.navx{margin:0 3px 0 4px;font:10px/12px "DejaVu Sans",sans-serif;color:#333}
.navbtn{height:22px;margin:0 0 1px 1px;border:1px solid #a8a8a8;background:#f0f0f0;text-align:center;line-height:22px;flex:none}
.treehead{height:26px;display:flex;align-items:center;padding-left:6px;background:#f6f6f6;flex:none}
.tree{height:487px;margin:0 2px 1px 2px;border:1px solid #9a9a9a;background:#fff;display:flex;flex:none;overflow:hidden}
.list{width:143px;flex:none;padding-top:1px;overflow:hidden}
.row{height:16px;display:flex;align-items:center;white-space:nowrap;flex:none}
.row.c{background-image:linear-gradient(#888 50%,transparent 50%),linear-gradient(#888 50%,transparent 50%);background-size:1px 2px,1px 2px;background-position:12px 0,31px 0;background-repeat:repeat-y}
.row.last{background-image:linear-gradient(#888 50%,transparent 50%);background-size:1px 2px;background-position:12px 0;background-repeat:repeat-y}
.g{display:block;width:12px;height:9px;margin:-7px 0 0 31px;border-left:1px dotted #777;border-bottom:1px dotted #777;flex:none}
.row.c span{margin-left:4px}
.row.p span{margin-left:5px;font-size:12px}
.chv{width:8px;height:8px;margin-left:7px;flex:none}
.d{display:block;width:8px;border-top:1px dotted #777;margin-left:1px;flex:none}
.row.sel span{background:#d4d4d4;width:75px;margin-left:3px;padding-left:1px}
.row.sel svg{background:#e8e8e8}
.scroll{width:15px;background:#fff;display:flex;flex-direction:column;flex:none}
.thumb{height:385px;background:#cdcdcd}
.sdown{width:8px;height:8px;margin:85px 0 0 4px}

.work{flex:1;display:flex;flex-direction:column;min-width:0}
.r2{height:29px;padding-bottom:1px}
.b2a{width:780px}
.b2b{flex:1;margin-left:3px}
.grip{width:2px;height:16px;flex:none;background:repeating-linear-gradient(#a8a8a8 0 2px,transparent 2px 4px)}
.lbl{color:#999;flex:none}
.rl{color:#222}
.spin{height:22px;border:1px solid #8c8c8c;background:#f8f8f8;display:flex;align-items:center;justify-content:flex-end;color:#666;flex:none;padding-right:0}
.s58{width:58px}
.s65{width:65px}
.spn{width:17px;height:100%;display:flex;flex-direction:column;justify-content:space-around;align-items:center;padding:3px 0;margin-left:5px}
.spn i{display:block;width:0;height:0;border:3px solid transparent}
.spn .up{border-bottom:3px solid #777;border-top:0}
.spn .dn{border-top:3px solid #777;border-bottom:0}
.ck{width:12px;height:12px;border:1px solid #999;background:#fff;flex:none}
.r3{height:25px;padding-left:8px}
.b3a{width:630px}
.b3b{width:422px;margin-left:3px}
.cell{display:flex;align-items:center;justify-content:space-between;height:25px;background:#fff;padding:0 3px 0 2px;margin-right:3px;flex:none}
.w58{width:58px}.w68{width:68px}.w69{width:69px}.w70{width:70px}
.r4{height:30px;padding:4px 0;padding-left:413px}
.b4{width:31px;height:22px;background:#f6f6f6}
.r5{height:28px}
.b5{flex:1;position:relative}
.hidbtn{display:block;height:24px;flex:none;align-self:flex-end}
.h1{width:55px;margin-left:216px;border:1px solid #777}
.h2{width:51px;margin-left:59px;border:1px solid #0078d7;background:#dce9f5}
.act{height:24px;border:1px solid #0078d7;background:#e4eff9;margin-left:4px;padding:0 3px;width:66px;gap:3px}
.vr{gap:4px}
.au{gap:6px}
.canvas{height:481px;flex:none;background:#000}
.cad{display:block;width:1196px;height:481px}
.bub text{fill:#c8c8c8;font:700 14px "Liberation Sans",sans-serif;text-anchor:middle}
.axy{fill:#00c800;font:13px "Liberation Sans",sans-serif}
.axx{fill:#e00000;font:13px "Liberation Sans",sans-serif}
.r6{height:30px;padding:1px 0 2px;background:#f0f0f0}
.b6{width:475px}
.tog{height:23px;margin-left:0;border:1px solid #0078d7;background:#dce9f5;padding:0 3px;gap:3px}
.tg1{margin-left:4px}
.b6 .grip{margin-right:3px}
.s3{gap:3px}

.status{height:21px;flex:none;display:flex;gap:2px;background:#f0f0f0;padding-top:0}
.st{height:21px;background:#fcfcfc;border:1px solid #dcdcdc;padding:0 2px;display:block;line-height:20px;white-space:nowrap;flex:none}
.st .la{line-height:18px}
.w148{width:148px}.w78{width:78px}.w98{width:98px}.w48{width:48px}
.grow{flex:1}

.taskbar{height:40px;flex:none;display:flex;background:#020c10;align-items:stretch;color:#fff}
.start{width:48px;background:#000;display:flex;align-items:center;justify-content:center;flex:none}
.win{width:16px;height:16px;margin-left:0}
.search{width:344px;background:#333;display:flex;align-items:center;flex:none;position:relative}
.cort{width:16px;height:16px;border:2.500px solid #e8e8e8;border-radius:50%;margin-left:12px;flex:none}
.stext{margin-left:8px;font-size:14px;color:#8a8a8a}
.mic{width:13px;height:17px;margin-left:auto;margin-right:15px}
.tiles{display:flex;margin-left:4px;flex:none}
.tile{width:49.300px;display:flex;justify-content:center;flex:none}
.tbox{width:40px;height:40px;display:flex;align-items:center;justify-content:center;border-bottom:2px solid transparent;flex:none}
.tbox.run{border-bottom-color:#76b9ed}
.tile.active{background:#3a4347}
.tile.active .tbox{width:100%}
.ti{width:24px;height:24px;display:block}
.nudge1 .ti{margin-right:5px}
.nudge2 .ti{margin-right:6px}
.qm{fill:#ffe600;font:700 18px "Liberation Sans",sans-serif}
.cpu{width:60px;margin-left:97px;text-align:center;line-height:17px;padding-top:3px;flex:none;font-size:12px}
.tray{display:flex;align-items:center;flex:none;margin-left:13px}
.tr{width:15px;height:15px;flex:none}
.t2{margin-left:8px}
.t3{margin-left:10px}
.t4{margin-left:6px}
.kb{width:24px;height:16px;margin-left:11px;flex:none}
.zh{margin-left:8px;font-size:14px}
.sg{width:14px;height:15px;margin-left:15px;background:#e8471c;border-radius:3px;display:flex;align-items:center;justify-content:center;transform:rotate(-8deg)}
.sgs{font:700 13px/13px "Liberation Sans",sans-serif;color:#fff}
.clock{width:58px;margin-left:18px;margin-right:-8px;position:relative;z-index:1;text-align:center;line-height:17px;padding-top:3px;flex:none;font-size:12px;white-space:nowrap}
.notify{background:#000;flex:1;display:flex;align-items:center;justify-content:center}
.notify svg{width:16px;height:16px;margin-left:4px}

.dialog{position:absolute;left:149px;top:175px;width:413px;height:371px;border:1px solid #4a97dc;background:#efefef;box-shadow:0 0 4px rgba(0,0,0,.35)}
.dtitle{height:25px;background:#fff;display:flex;align-items:center;padding-left:3px}
.dtitle span:nth-child(2){margin-left:5px}
.dx{margin-left:auto;margin-right:8px;font:14px/14px "DejaVu Sans",sans-serif;color:#222}
.dbody{display:flex;padding:22px 0 0 13px}
.grp{border:1px solid #d8d8d8}
.lg{margin:-9px 0 0 7px;background:#efefef;width:max-content;height:16px;padding:0 1px}
.gl{width:122px;height:275px;flex:none}
.rad{display:flex;align-items:center;gap:4px;height:16px;margin-left:7px}
.r-a{margin-top:34px}
.r-b{margin-top:73px}
.r-c{margin-top:72px}
.ro{width:13px;height:13px;border:1px solid #555;border-radius:50%;background:#fff;flex:none;display:flex;align-items:center;justify-content:center;margin-right:-1px}
.ro.on::after{content:"";width:7px;height:7px;border-radius:50%;background:#333}
.dright{margin-left:4px;width:254px;flex:none}
.gr{margin-left:12px;width:233px;height:42px;margin-bottom:13px}
.g3{margin-bottom:14px}
.dcb{margin:4px 0 0 43px;width:173px;height:20px;border:1px solid #7a7a7a;background:#fff;display:flex;align-items:center;position:relative}
.foc{border-color:#2f7fb5}
.hl{background:#0078d7;color:#fff;margin-left:2px;font:12px/12px "Liberation Mono",monospace;letter-spacing:-1.200px;padding:0 2px 0 1px;height:12px}
.cv{width:10px;height:6px;margin-left:auto;margin-right:4px;flex:none}
.drow{display:flex;align-items:center;height:20px;margin-top:39px}
.dck{width:13px;height:13px;border:1px solid #444;background:#fff;flex:none;display:block}
.dck svg{display:block;width:11px;height:11px}
.dtxt{margin-left:3px;white-space:nowrap}
.dcb2{width:144px;height:20px;margin-left:21px;background:#e3e3e3;border:1px solid #adadad;display:flex;align-items:center;padding-left:3px}
.dbtns{display:flex;margin:18px 0 0 81px;gap:21px}
.dbtn{height:28px;background:#e1e1e1;border:1px solid #adadad;text-align:center;line-height:26px}
.b72{width:72px}.b78{width:78px}

.widget{position:absolute;left:871px;top:12px;width:128px;height:46px}
.pill{position:absolute;left:22px;top:6px;width:105px;height:39px;border-radius:20px;background:linear-gradient(#f6f6f6,#e4e4e4);border:1px solid #c4c4c4;box-shadow:0 1px 3px rgba(0,0,0,.3);display:flex;align-items:center}
.pa{margin-left:26px;display:flex;flex-direction:column;gap:6px}
.arr{display:block;width:8px;height:10px}
.ps{margin-left:14px;display:flex;flex-direction:column;text-align:right;font:11px/15px "Liberation Sans",sans-serif;color:#222;width:28px}
.pb{width:17px;height:17px;border-radius:50%;background:#3a7bd8;margin-left:5px;position:relative;display:flex;align-items:center;justify-content:center}
.plus{font:700 16px/16px "Liberation Sans",sans-serif;color:#fff}
.dot{position:absolute;right:-2px;top:-4px;width:8px;height:8px;border-radius:50%;background:#e02d35}
.ball{position:absolute;left:0;top:2px;width:44px;height:44px;border-radius:50%;background:radial-gradient(ellipse 10px 3px at 50% 5px,rgba(255,255,255,.55),transparent),linear-gradient(#178a4c,#2aa252 50%,#58cf66);border:3px solid #f4f4f4;box-shadow:0 0 2px 1px rgba(0,0,0,.35);display:flex;align-items:center;justify-content:center;font:15px/15px "Liberation Sans",sans-serif;color:#fff}

.ime{position:absolute;left:1182px;top:702px;width:184px;height:26px;display:flex;align-items:center}
.imebar{position:absolute;left:23px;top:3px;right:0;height:20px;background:#fff;border:1px solid #e6e6e6;display:flex;align-items:center;padding-left:12px}
.imes{position:absolute;left:0;top:0;width:26px;height:25px;background:#f04f17;border-radius:6px;display:flex;align-items:center;justify-content:center;z-index:1;transform:rotate(-6deg)}
.imes span{font:700 24px/24px "Liberation Sans",sans-serif;color:#fff}
.ien{color:#1e78c8;font-size:13px;font-weight:700}
.ipn{color:#1e78c8;margin-left:11px;font:700 11px/12px "Liberation Sans",sans-serif;width:10px}
.ii{width:15px;height:15px;margin-left:8px;flex:none}
.ink{position:absolute;left:0;top:0;width:1366px;height:768px;pointer-events:none;shape-rendering:crispEdges}
```
